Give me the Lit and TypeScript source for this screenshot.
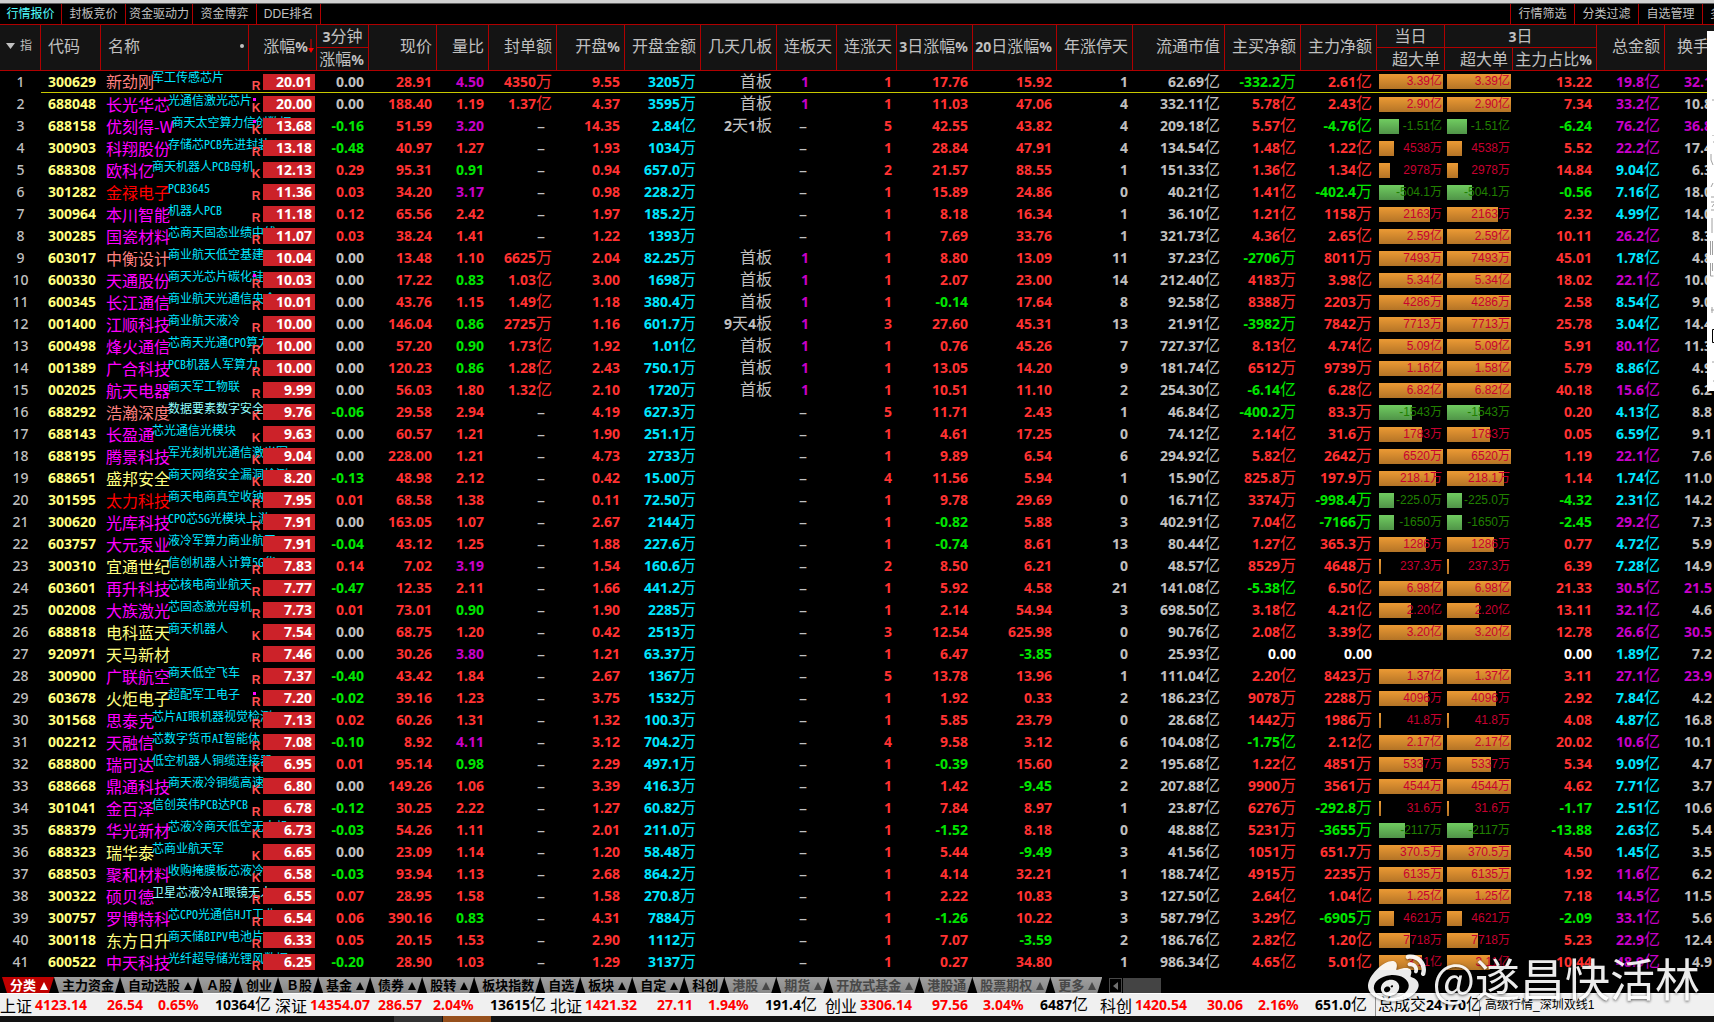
import { LitElement, html, css, nothing } from "lit";
import { customElement } from "lit/decorators.js";
import { classMap } from "lit/directives/class-map.js";
import { styleMap } from "lit/directives/style-map.js";

/* no|code|name|tone|note|mark|change|3min|price|volRatio|sealed|open|openAmount|boards|streak|rise|d3|d20|limits|cap|buy|main|big1|big3|bar|share|total|turnover */
const SOURCE = `
1|300629|新劲刚|p|军工传感芯片|R|20.01|0.00|28.91|4.50|4350万|9.55|3205万|首板|1|1|17.76|15.92|1|62.69亿|-332.2万|2.61亿|3.39亿|3.39亿|64|13.22|19.8亿|32.1
2|688048|长光华芯|m|光通信激光芯片|K.|20.00|0.00|188.40|1.19|1.37亿|4.37|3595万|首板|1|1|11.03|47.06|4|332.11亿|5.78亿|2.43亿|2.90亿|2.90亿|64|7.34|33.2亿|10.8
3|688158|优刻得-W|m|商天太空算力信创数据|K.|13.68|-0.16|51.59|3.20|–|14.35|2.84亿|2天1板|–|5|42.55|43.82|4|209.18亿|5.57亿|-4.76亿|-1.51亿|-1.51亿|20|-6.24|76.2亿|36.8
4|300903|科翔股份|m|存储芯PCB先进封装|R|13.18|-0.48|40.97|1.27|–|1.93|1034万||–|1|28.84|47.91|4|134.54亿|1.48亿|1.22亿|4538万|4538万|15|5.52|22.2亿|17.4
5|688308|欧科亿|m|商天机器人PCB母机|K|12.13|0.29|95.31|0.91|–|0.94|657.0万||–|2|21.57|88.55|1|151.33亿|1.36亿|1.34亿|2978万|2978万|11|14.84|9.04亿|6.3
6|301282|金禄电子|r|PCB3645|R|11.36|0.03|34.20|3.17|–|0.98|228.2万||–|1|15.89|24.86|0|40.21亿|1.41亿|-402.4万|-504.1万|-504.1万|25|-0.56|7.16亿|18.0
7|300964|本川智能|m|机器人PCB|R|11.18|0.12|65.56|2.42|–|1.97|185.2万||–|1|8.18|16.34|1|36.10亿|1.21亿|1158万|2163万|2163万|51|2.32|4.99亿|14.0
8|300285|国瓷材料|m|芯商天固态业绩中线|R|11.07|0.03|38.24|1.41|–|1.22|1393万||–|1|7.69|33.76|1|321.73亿|4.36亿|2.65亿|2.59亿|2.59亿|64|10.11|26.2亿|8.3
9|603017|中衡设计|p|商业航天低空基建||10.04|0.00|13.48|1.10|6625万|2.04|82.25万|首板|1|1|8.80|13.09|11|37.23亿|-2706万|8011万|7493万|7493万|64|45.01|1.78亿|4.8
10|600330|天通股份|m|商天光芯片碳化硅|R.|10.03|0.00|17.22|0.83|1.03亿|3.00|1698万|首板|1|1|2.07|23.00|14|212.40亿|4183万|3.98亿|5.34亿|5.34亿|64|18.02|22.1亿|10.0
11|600345|长江通信|m|商业航天光通信央企|R|10.01|0.00|43.76|1.15|1.49亿|1.18|380.4万|首板|1|1|-0.14|17.64|8|92.58亿|8388万|2203万|4286万|4286万|64|2.58|8.54亿|9.0
12|001400|江顺科技|m|商业航天液冷|R|10.00|0.00|146.04|0.86|2725万|1.16|601.7万|9天4板|1|3|27.60|45.31|13|21.91亿|-3982万|7842万|7713万|7713万|64|25.78|3.04亿|14.4
13|600498|烽火通信|m|芯商天光通CPO算力|R|10.00|0.00|57.20|0.90|1.73亿|1.92|1.01亿|首板|1|1|0.76|45.26|7|727.37亿|8.13亿|4.74亿|5.09亿|5.09亿|64|5.91|80.1亿|11.3
14|001389|广合科技|m|PCB机器人军算力|R|10.00|0.00|120.23|0.86|1.28亿|2.43|750.1万|首板|1|1|13.05|14.20|9|181.74亿|6512万|9739万|1.16亿|1.58亿|64|5.79|8.86亿|4.9
15|002025|航天电器|m|商天军工物联|R|9.99|0.00|56.03|1.80|1.32亿|2.10|1720万|首板|1|1|10.51|11.10|2|254.30亿|-6.14亿|6.28亿|6.82亿|6.82亿|64|40.18|15.6亿|6.2
16|688292|浩瀚深度|p|*数据要素数字安全|K|9.76|-0.06|29.58|2.94|–|4.19|627.3万||–|5|11.71|2.43|1|46.84亿|-400.2万|83.3万|-1543万|-1543万|33|0.20|4.13亿|8.8
17|688143|长盈通|m|芯光通信光模块|K|9.63|0.00|60.57|1.21|–|1.90|251.1万||–|1|4.61|17.25|0|74.12亿|2.14亿|31.6万|1783万|1783万|43|0.05|6.59亿|9.1
18|688195|腾景科技|m|军光刻机光通信激光军|K|9.04|0.00|228.00|1.21|–|4.73|2733万||–|1|9.89|6.54|6|294.92亿|5.82亿|2642万|6520万|6520万|64|1.19|22.1亿|7.6
19|688651|盛邦安全|y|商天网络安全漏洞检测|K|8.20|-0.13|48.98|2.12|–|0.42|15.00万||–|4|11.56|5.94|1|15.90亿|825.8万|197.9万|218.1万|218.1万|57|1.14|1.74亿|11.0
20|301595|太力科技|r|商天电商真空收钠|R|7.95|0.01|68.58|1.38|–|0.11|72.50万||–|1|9.78|29.69|0|16.71亿|3374万|-998.4万|-225.0万|-225.0万|15|-4.32|2.31亿|14.2
21|300620|光库科技|m|CPO芯5G光模块上游|R|7.91|0.00|163.05|1.07|–|2.67|2144万||–|1|-0.82|5.88|3|402.91亿|7.04亿|-7166万|-1650万|-1650万|15|-2.45|29.2亿|7.3
22|603757|大元泵业|m|液冷军算力商业航天||7.91|-0.04|43.12|1.25|–|1.88|227.6万||–|1|-0.74|8.61|13|80.44亿|1.27亿|365.3万|1286万|1286万|47|0.77|4.72亿|5.9
23|300310|宜通世纪|y|信创机器人计算5G华|R|7.83|0.14|7.02|3.19|–|1.54|160.6万||–|2|8.50|6.21|0|48.57亿|8529万|4648万|237.3万|237.3万|2|6.39|7.28亿|14.9
24|603601|再升科技|m|芯核电商业航天|R|7.77|-0.47|12.35|2.11|–|1.66|441.2万||–|1|5.92|4.58|21|141.08亿|-5.38亿|6.50亿|6.98亿|6.98亿|64|21.33|30.5亿|21.5
25|002008|大族激光|m|芯固态激光母机|R|7.73|0.01|73.01|0.90|–|1.90|2285万||–|1|2.14|54.94|3|698.50亿|3.18亿|4.21亿|2.20亿|2.20亿|32|13.11|32.1亿|4.6
26|688818|电科蓝天|y|商天机器人|K|7.54|0.00|68.75|1.20|–|0.42|2513万||–|3|12.54|625.98|0|90.76亿|2.08亿|3.39亿|3.20亿|3.20亿|64|12.78|26.6亿|30.5
27|920971|天马新材|y||R|7.46|0.00|30.26|3.80|–|1.21|63.37万||–|1|6.47|-3.85|0|25.93亿|0.00|0.00|||0|0.00|1.89亿|7.2
28|300900|广联航空|m|商天低空飞车|R|7.37|-0.40|43.42|1.84|–|2.67|1367万||–|5|13.78|13.96|1|111.04亿|2.20亿|8423万|1.37亿|1.37亿|64|3.11|27.1亿|23.9
29|603678|火炬电子|y|超配军工电子|R.|7.20|-0.02|39.16|1.23|–|3.75|1532万||–|1|1.92|0.33|2|186.23亿|9078万|2288万|4096万|4096万|49|2.92|7.84亿|4.2
30|301568|思泰克|m|芯片AI眼机器视觉检测|R|7.13|0.02|60.26|1.31|–|1.32|100.3万||–|1|5.85|23.79|0|28.68亿|1442万|1986万|41.8万|41.8万|2|4.08|4.87亿|16.8
31|002212|天融信|m|芯数字货币AI智能体|R|7.08|-0.10|8.92|4.11|–|3.12|704.2万||–|4|9.58|3.12|6|104.08亿|-1.75亿|2.12亿|2.17亿|2.17亿|64|20.02|10.6亿|10.1
32|688800|瑞可达|m|低空机器人铜缆连接器|K|6.95|0.01|95.14|0.98|–|2.29|497.1万||–|1|-0.39|15.60|2|195.68亿|1.22亿|4851万|5337万|5337万|44|5.34|9.09亿|4.7
33|688668|鼎通科技|m|商天液冷铜缆高速|K|6.80|0.00|149.26|1.06|–|3.39|416.3万||–|1|1.42|-9.45|2|207.88亿|9900万|3561万|4544万|4544万|64|4.62|7.71亿|3.7
34|301041|金百泽|m|信创英伟PCB达PCB|R|6.78|-0.12|30.25|2.22|–|1.27|60.82万||–|1|7.84|8.97|1|23.87亿|6276万|-292.8万|31.6万|31.6万|2|-1.17|2.51亿|10.6
35|688379|华光新材|m|芯液冷商天低空无人机|K|6.73|-0.03|54.26|1.11|–|2.01|211.0万||–|1|-1.52|8.18|0|48.88亿|5231万|-3655万|-2117万|-2117万|26|-13.88|2.63亿|5.4
36|688323|瑞华泰|y|芯商业航天军|K|6.65|0.00|23.09|1.14|–|1.20|58.48万||–|1|5.44|-9.49|3|41.56亿|1051万|651.7万|370.5万|370.5万|64|4.50|1.45亿|3.5
37|688503|聚和材料|m|收购掩膜板芯液冷|K|6.58|-0.03|93.94|1.13|–|2.68|864.2万||–|1|4.14|32.21|1|188.74亿|4915万|2235万|6135万|6135万|64|1.92|11.6亿|6.2
38|300322|硕贝德|m|*卫星芯液冷AI眼镜无人|R|6.55|0.07|28.95|1.58|–|1.58|270.8万||–|1|2.22|10.83|3|127.50亿|2.64亿|1.04亿|1.25亿|1.25亿|64|7.18|14.5亿|11.5
39|300757|罗博特科|m|芯CPO光通信HJT工业|R|6.54|0.06|390.16|0.83|–|4.31|7884万||–|1|-1.26|10.22|3|587.79亿|3.29亿|-6905万|4621万|4621万|15|-2.09|33.1亿|5.6
40|300118|东方日升|y|商天储BIPV电池片|R|6.33|0.05|20.15|1.53|–|2.90|1112万||–|1|7.07|-3.59|2|186.76亿|2.82亿|1.20亿|7718万|7718万|31|5.23|22.9亿|12.4
41|600522|中天科技|m|光纤超导储光锂风数据|R|6.25|-0.20|28.90|1.03|–|1.29|3137万||–|1|0.27|34.80|1|986.34亿|4.65亿|5.01亿|3.11亿|3.11亿|43|10.44|48.9亿|4.9
`;

const ROWS = SOURCE.trim().split("\n").map((line) => line.split("|"));

const COLUMNS = [
  "c41", "c60", "c148", "c68", "c52", "c68", "c52", "c68", "c68", "c76", "c76", "c60",
  "c60", "c76", "c84", "c76", "c92", "c76", "c76", "c68", "c68", "c84", "c68", "c49",
];

const VIEWS = ["行情报价", "封板竞价", "资金驱动力", "资金博弈", "DDE排名"];
const TOOLS = ["行情筛选", "分类过滤", "自选管理"];

const SHEETS = [
  "分类▲", "主力资金", "自动选股▲", "Ａ股", "创业", "Ｂ股", "基金▲", "债券▲", "股转▲",
  "板块指数", "自选", "板块▲", "自定▲", "科创", "港股▲", "期货▲", "开放式基金▲", "港股通",
  "股票期权▲", "更多▲",
];
const FIRST_DIM_SHEET = 14;

const INDICES = [
  ["上证", "4123.14", "26.54", "0.65%", "10364亿"],
  ["深证", "14354.07", "286.57", "2.04%", "13615亿"],
  ["北证", "1421.32", "27.11", "1.94%", "191.4亿"],
  ["创业", "3306.14", "97.56", "3.04%", "6487亿"],
  ["科创", "1420.54", "30.06", "2.16%", "651.0亿"],
];

const signTone = (v: string, zero: string) =>
  v.startsWith("-") ? "green" : parseFloat(v) === 0 ? zero : "red";
const ratioTone = (v: string) => (+v >= 3 ? "purple" : +v < 1 ? "green" : "red");

/* Digits are set bold, the Chinese characters between them in the regular weight. */
const mixed = (v: string) =>
  v.split(/([\u4e00-\u9fff]+)/).filter(Boolean).map((part) =>
    /[\u4e00-\u9fff]/.test(part) ? html`<span class="han">${part}</span>` : part,
  );

const cell = (v: string, tone: string) => html`<td class="num ${tone}">${mixed(v)}</td>`;

@customElement("app-root")
export class AppRoot extends LitElement {
  static styles = css`
    :host {
      display: block;
      background: #000;
      color: #c0c0c0;
      font-family: "Noto Sans", "Noto Sans CJK SC", sans-serif;
    }
    .screen {
      position: relative;
      display: flex;
      flex-direction: column;
      min-height: 100vh;
      overflow: hidden;
    }
    button {
      appearance: none;
      margin: 0;
      padding: 0;
      border: 0;
      background: none;
      color: inherit;
      font: inherit;
      white-space: nowrap;
      cursor: pointer;
    }
    .edge {
      height: 3px;
      background: #d0d0d0;
      border-bottom: 1px solid #606060;
    }
    .views {
      display: flex;
      height: 20px;
      border-bottom: 1px solid #b00000;
      font: 12px/20px "Liberation Sans", "Noto Sans CJK SC", sans-serif;
    }
    .views button {
      box-sizing: border-box;
      min-width: 64px;
      padding: 0 3px;
      border-right: 1px solid #b00000;
    }
    .views .active {
      min-width: 62px;
      color: #50ffff;
    }
    .views .tools {
      display: flex;
      margin-left: auto;
      border-left: 1px solid #b00000;
    }
    .views .tools .more {
      width: 11px;
      min-width: 0;
      padding: 0 0 0 7px;
      border: 0;
      overflow: hidden;
    }

    table {
      width: 100%;
      table-layout: fixed;
      border-collapse: separate;
      border-spacing: 0;
    }
    .c41 { width: 41px; }
    .c49 { width: 49px; }
    .c52 { width: 52px; }
    .c60 { width: 60px; }
    .c68 { width: 68px; }
    .c76 { width: 76px; }
    .c84 { width: 84px; }
    .c92 { width: 92px; }
    .c148 { width: 148px; }
    th {
      box-sizing: border-box;
      height: 23px;
      padding: 0 4px 0 0;
      border-right: 1px solid #b00000;
      border-bottom: 1px solid #b00000;
      background: #141414;
      font-size: 16px;
      line-height: 22px;
      font-weight: 400;
      text-align: right;
      white-space: nowrap;
      overflow: hidden;
    }
    th b {
      font-size: 14px;
      line-height: 0;
      font-weight: 700;
    }
    th[rowspan] { padding-bottom: 4px; }
    th.left {
      padding-left: 7px;
      text-align: left;
    }
    th.center {
      padding: 0;
      text-align: center;
    }
    th.last {
      padding-right: 0;
      padding-left: 12px;
      border-right: 0;
      text-align: left;
    }
    .pick {
      display: flex;
      align-items: center;
      gap: 5px;
      padding-left: 6px;
      font-size: 12px;
    }
    .pick svg { width: 9px; height: 6px; }
    .title {
      display: flex;
      align-items: center;
      justify-content: space-between;
    }
    .dot {
      width: 4px;
      height: 4px;
      border-radius: 2px;
      background: #c0c0c0;
    }
    th.sorted { padding-right: 2px; }
    .sort {
      width: 6px;
      height: 15px;
      vertical-align: -2px;
    }

    td {
      height: 22px;
      padding: 0;
      font-size: 14px;
      line-height: 22px;
      font-weight: 700;
      white-space: nowrap;
    }
    tr.selected td {
      height: 21px;
      line-height: 21px;
      border-bottom: 1px solid #c8c800;
    }
    tr.selected td.no { border-bottom-color: transparent; }
    .no {
      text-align: center;
      font-weight: 500;
    }
    .code {
      padding-left: 7px;
      color: #ffff80;
    }
    .num {
      padding-right: 5px;
      text-align: right;
    }
    .num.streak { padding-right: 28px; }
    .num.blank {
      padding-right: 12px;
      font-size: 16px;
      font-weight: 400;
    }
    .num.streak.blank { padding-right: 30px; }
    .num.turn { padding-right: 2px; }
    .han {
      font-family: "Noto Sans CJK SC", sans-serif;
      font-size: 16px;
      line-height: 0;
      font-weight: 400;
    }
    .red { color: #ff3232; }
    .green { color: #00e600; }
    .grey { color: #c0c0c0; }
    .purple { color: #c800c8; }
    .cyan { color: #00e6ff; }
    .white { color: #fff; }

    .stock {
      display: flex;
      align-items: flex-start;
      height: 21px;
      padding-left: 5px;
    }
    .name {
      font: 400 16px/20px "Noto Sans CJK SC", sans-serif;
    }
    .name.m { color: #ff00ff; }
    .name.p { color: #ff8080; }
    .name.r { color: #ff0000; }
    .name.y { color: #ffff80; }
    .note {
      width: 0;
      margin-left: -2px;
      color: #00e6ff;
      font: 400 12px/12px "Noto Sans Mono CJK SC", "Noto Sans CJK SC", sans-serif;
    }
    .note.fresh { color: #90ffff; }
    .gain {
      position: relative;
      z-index: 1;
      display: grid;
      grid-template-columns: 14px 1fr;
      padding-right: 2px;
    }
    .mark {
      display: flex;
      flex-direction: column;
      align-items: center;
      justify-content: flex-end;
      height: 16px;
      color: #ff5050;
      font: 700 12px/8px "Liberation Sans", sans-serif;
    }
    .flag {
      width: 3px;
      height: 3px;
      margin: 0 4px 3px 0;
      background: #ff00ff;
    }
    .chip {
      height: 16px;
      padding-right: 3px;
      background: #cc2229;
      color: #fff;
      line-height: 16px;
      text-align: right;
    }
    .bar {
      position: relative;
      height: 15px;
      margin: 0 2px;
      color: #c80030;
      font: 400 12px/15px "Liberation Sans", "Noto Sans CJK SC", sans-serif;
      text-align: right;
    }
    .bar.down { color: #208000; }
    .fill {
      position: absolute;
      inset: 0 auto 0 0;
      background: linear-gradient(#ec9a34, #b47426);
    }
    .down .fill { background: linear-gradient(#70cc60, #509448); }
    .bar span {
      position: relative;
      padding-right: 1px;
    }

    .sheets {
      display: flex;
      align-items: flex-end;
      height: 20px;
      padding-left: 2px;
      border-bottom: 1px solid #fff;
    }
    .sheets .sheet {
      height: 16px;
      padding: 0 6px 0 8px;
      background: linear-gradient(#a0a0a0, #888);
      clip-path: polygon(0 0, 100% 0, calc(100% - 5px) 100%, 5px 100%);
      color: #000;
      font: 700 13px/16px "Noto Sans CJK SC", sans-serif;
    }
    .sheets .dim { color: #484848; }
    .sheets .current {
      background: #c00000;
      color: #fff;
    }
    .up {
      width: 8px;
      height: 8px;
      margin-left: 4px;
    }
    .sheets .scroll {
      width: 13px;
      height: 15px;
      margin-left: 7px;
      border: 1px solid #484848;
      color: #707070;
      line-height: 0;
    }
    .scroll svg { width: 5px; height: 8px; }
    .thumb {
      width: 38px;
      height: 15px;
      margin-left: 1px;
      background: #444;
    }

    .status {
      display: flex;
      height: 22px;
      background: #f0f0f0;
      color: #000;
      font-size: 14px;
      line-height: 22px;
      font-weight: 700;
      white-space: nowrap;
    }
    .index {
      display: grid;
      grid-template-columns: 35px 65px 58px 57px 60px;
      width: 275px;
    }
    .index > .han { line-height: 22px; }
    .index .val { color: #f00; }
    .index .diff {
      padding-right: 8px;
      text-align: center;
    }
    .sum {
      width: 101px;
      padding-left: 2px;
      border-left: 1px solid #909090;
      border-right: 1px solid #909090;
    }
    .server {
      padding-left: 5px;
      font: 400 12px/22px "Liberation Sans", "Noto Sans CJK SC", sans-serif;
    }
    .desk {
      display: flex;
      flex: 1;
      gap: 1px;
      min-height: 6px;
      padding-left: 394px;
      background: #121212;
    }
    .task {
      width: 48px;
      background: #333;
    }
    .task.hot { background: #96501c; }

    .drawer {
      position: absolute;
      top: 31px;
      right: 0;
      z-index: 2;
      width: 7px;
      height: 360px;
      background: #fff;
    }
    .drawer svg { display: block; width: 7px; height: 360px; }
    .credit {
      position: absolute;
      right: 14px;
      bottom: 15px;
      z-index: 2;
      display: flex;
      align-items: center;
      gap: 6px;
      color: #fff;
      font: 400 45px/58px "Noto Sans CJK SC", sans-serif;
      text-shadow: 0 1px 3px rgba(0, 0, 0, 0.7);
      opacity: 0.92;
    }
    .credit svg {
      width: 58px;
      height: 58px;
      fill: #fff;
      filter: drop-shadow(0 1px 1px rgba(0, 0, 0, 0.5));
    }
  `;

  private bar(value: string, size: string) {
    if (!value) return html`<td></td>`;
    return html`<td>
      <div class=${classMap({ bar: true, down: value.startsWith("-") })}>
        <div class="fill" style=${styleMap({ width: `${(+size / 64) * 100}%` })}></div>
        <span>${value}</span>
      </div>
    </td>`;
  }

  private row(r: string[], i: number) {
    const [no, code, name, tone, note, mark, gain, min3, price, ratio, sealed, open, openSum,
      boards, streak, rise, d3, d20, limits, cap, buy, main, big1, big3, size, share, total, turn] = r;
    const blank = sealed === "–";
    return html`<tr class=${i === 0 ? "selected" : ""}>
      <td class="no">${no}</td>
      <td class="code">${code}</td>
      <td>
        <div class="stock">
          <span class="name ${tone}">${name}</span>
          <span class=${classMap({ note: true, fresh: note.startsWith("*") })}>${note.replace("*", "")}</span>
        </div>
      </td>
      <td>
        <div class="gain">
          <div class="mark">
            ${mark.endsWith(".") ? html`<i class="flag"></i>` : nothing}
            <span>${mark.charAt(0)}</span>
          </div>
          <div class="chip">${gain}</div>
        </div>
      </td>
      ${cell(min3, signTone(min3, "grey"))}
      ${cell(price, "red")}
      ${cell(ratio, ratioTone(ratio))}
      ${cell(sealed, blank ? "grey blank" : "red")}
      ${cell(open, "red")}
      ${cell(openSum, "cyan")}
      ${cell(boards, "grey")}
      ${cell(streak, streak === "–" ? "grey streak blank" : "purple streak")}
      ${cell(rise, "red")}
      ${cell(d3, signTone(d3, "grey"))}
      ${cell(d20, signTone(d20, "grey"))}
      ${cell(limits, "grey")}
      ${cell(cap, "grey")}
      ${cell(buy, signTone(buy, "white"))}
      ${cell(main, signTone(main, "white"))}
      ${this.bar(big1, size)}
      ${this.bar(big3, size)}
      ${cell(share, signTone(share, "white"))}
      ${cell(total, parseFloat(total) >= 10 ? "purple" : "cyan")}
      ${cell(turn, +turn > 20 ? "purple turn" : "grey turn")}
    </tr>`;
  }

  private sheet(label: string, i: number) {
    const menu = label.endsWith("▲");
    return html`<button
      type="button"
      class=${classMap({ sheet: true, current: i === 0, dim: i >= FIRST_DIM_SHEET })}
    >${label.replace("▲", "")}${menu
        ? html`<svg class="up" viewBox="0 0 8 8" aria-hidden="true"><path d="M4 0 8 8H0z" fill="currentColor" /></svg>`
        : nothing}</button>`;
  }

  render() {
    return html`
      <div class="screen">
        <div class="edge"></div>
        <nav class="views">
          ${VIEWS.map((v, i) => html`<button type="button" class=${i === 0 ? "active" : ""}>${v}</button>`)}
          <div class="tools">
            ${TOOLS.map((v) => html`<button type="button">${v}</button>`)}
            <button type="button" class="more">多</button>
          </div>
        </nav>

        <table>
          <colgroup>${COLUMNS.map((c) => html`<col class=${c} />`)}</colgroup>
          <thead>
            <tr>
              <th rowspan="2">
                <div class="pick">
                  <svg viewBox="0 0 9 6" aria-hidden="true"><path d="M0 0h9L4.500 6z" fill="#c0c0c0" /></svg>指
                </div>
              </th>
              <th rowspan="2" class="left">代码</th>
              <th rowspan="2" class="left"><div class="title">名称<i class="dot"></i></div></th>
              <th rowspan="2" class="sorted">涨幅<b>%</b><svg class="sort" viewBox="0 0 6 15" aria-hidden="true"><path d="M3 0V11" stroke="#e00000" stroke-width="1" /><path d="M0 9h6L3 14z" fill="#ff0000" /></svg></th>
              <th class="center"><b>3</b>分钟</th>
              <th rowspan="2">现价</th>
              <th rowspan="2">量比</th>
              <th rowspan="2">封单额</th>
              <th rowspan="2">开盘<b>%</b></th>
              <th rowspan="2">开盘金额</th>
              <th rowspan="2">几天几板</th>
              <th rowspan="2">连板天</th>
              <th rowspan="2">连涨天</th>
              <th rowspan="2"><b>3</b>日涨幅<b>%</b></th>
              <th rowspan="2"><b>20</b>日涨幅<b>%</b></th>
              <th rowspan="2">年涨停天</th>
              <th rowspan="2">流通市值</th>
              <th rowspan="2">主买净额</th>
              <th rowspan="2">主力净额</th>
              <th class="center">当日</th>
              <th class="center" colspan="2"><b>3</b>日</th>
              <th rowspan="2">总金额</th>
              <th rowspan="2" class="last">换手</th>
            </tr>
            <tr>
              <th>涨幅<b>%</b></th>
              <th>超大单</th>
              <th>超大单</th>
              <th>主力占比<b>%</b></th>
            </tr>
          </thead>
          <tbody>${ROWS.map((r, i) => this.row(r, i))}</tbody>
        </table>

        <nav class="sheets">
          ${SHEETS.map((s, i) => this.sheet(s, i))}
          <button type="button" class="scroll" aria-label="向左滚动">
            <svg viewBox="0 0 5 8" aria-hidden="true"><path d="M5 0v8L0 4z" fill="currentColor" /></svg>
          </button>
          <div class="thumb"></div>
        </nav>

        <footer class="status">
          ${INDICES.map(([label, val, diff, pct, vol]) => html`<div class="index">
            <span class="han">${label}</span>
            <span class="val">${val}</span>
            <span class="val diff">${diff}</span>
            <span class="val">${pct}</span>
            <span>${mixed(vol)}</span>
          </div>`)}
          <div class="sum">${mixed("总成交24170亿")}</div>
          <div class="server">高级行情_深圳双线1</div>
        </footer>
        <div class="desk"><i class="task"></i><i class="task hot"></i></div>

        <div class="drawer">
          <svg viewBox="0 0 7 360" fill="none" stroke="#a0a0a0" aria-hidden="true">
            <path d="M5 69h2M6 104v1M6 111h1M4 123v6l2 5M4 156l2-4M4 166h3M4 171h3M5 176l2-3M4 179h3M5 187v15M3.500 210v14M5.500 210v14M3.500 232v13h3M5.500 232v8M4 279h3M5 276v6M5 331h2M6 350h1" />
            <path d="M7 298.500H5.500v13H7" stroke="#000" />
          </svg>
        </div>
        <div class="credit">
          <svg viewBox="0 0 24 24" aria-hidden="true">
            <path d="M10.098 20.323c-3.977.391-7.414-1.406-7.672-4.02-.259-2.609 2.759-5.047 6.740-5.441 3.979-.394 7.413 1.404 7.671 4.018.259 2.600-2.759 5.049-6.737 5.439l-.002.004zM9.050 17.219c-.384.616-1.208.884-1.829.602-.612-.279-.793-.991-.406-1.593.379-.595 1.176-.861 1.793-.601.622.263.820.972.442 1.592zm1.270-1.627c-.141.237-.449.353-.689.253-.236-.090-.313-.361-.177-.586.138-.227.436-.346.672-.240.239.090.315.360.180.601l.014-.028zm.176-2.719c-1.893-.493-4.033.450-4.857 2.118-.836 1.704-.026 3.591 1.886 4.210 1.983.640 4.318-.341 5.132-2.179.800-1.793-.201-3.642-2.161-4.149zm7.563-1.224c-.346-.105-.570-.180-.405-.615.375-.977.420-1.804 0-2.404-.781-1.112-2.915-1.053-5.364-.030 0 0-.766.331-.571-.271.376-1.217.315-2.224-.270-2.809-1.338-1.337-4.869.045-7.888 3.080C1.309 10.870 0 13.273 0 15.348c0 3.981 5.099 6.395 10.086 6.395 6.536 0 10.888-3.801 10.888-6.820 0-1.822-1.547-2.854-2.915-3.284v.010zm1.908-5.092c-.766-.856-1.908-1.187-2.960-.962-.436.090-.706.511-.616.932.090.420.511.691.932.602.511-.105 1.067.044 1.442.465.376.421.466.977.316 1.473-.136.406.089.856.510.992.405.119.857-.105.992-.512.330-1.021.120-2.178-.646-3.035l.030.045zm2.418-2.195c-1.576-1.757-3.905-2.419-6.054-1.968-.496.104-.812.587-.706 1.081.104.496.586.813 1.082.707 1.532-.331 3.185.150 4.296 1.383 1.112 1.246 1.429 2.943.947 4.416-.165.480.106 1.007.586 1.157.479.165.991-.104 1.157-.586.675-2.088.241-4.478-1.338-6.235l.030.045z" />
          </svg>
          <span>@遂昌快活林</span>
        </div>
      </div>
    `;
  }
}
